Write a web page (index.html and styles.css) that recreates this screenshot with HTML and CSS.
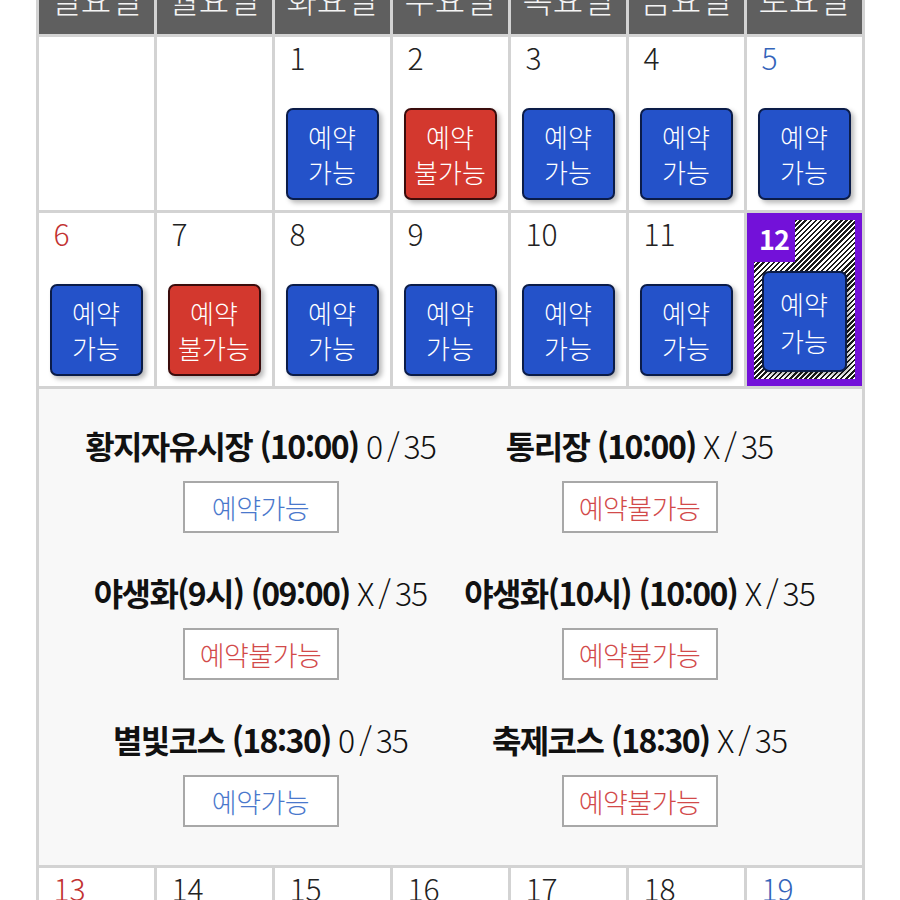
FILE: index.html
```html
<!DOCTYPE html>
<html lang="ko">
<head>
<meta charset="utf-8">
<title>예약 달력</title>
<link rel="stylesheet" href="styles.css">
</head>
<body>
<div class="cal">
  <div class="head">일요일</div>
  <div class="head">월요일</div>
  <div class="head">화요일</div>
  <div class="head">수요일</div>
  <div class="head">목요일</div>
  <div class="head">금요일</div>
  <div class="head">토요일</div>

  <div class="day"></div>
  <div class="day"></div>
  <div class="day"><div class="num">1</div><div class="btn ok">예약<br>가능</div></div>
  <div class="day"><div class="num">2</div><div class="btn no">예약<br>불가능</div></div>
  <div class="day"><div class="num">3</div><div class="btn ok">예약<br>가능</div></div>
  <div class="day"><div class="num">4</div><div class="btn ok">예약<br>가능</div></div>
  <div class="day"><div class="num sat">5</div><div class="btn ok">예약<br>가능</div></div>

  <div class="day"><div class="num sun">6</div><div class="btn ok">예약<br>가능</div></div>
  <div class="day"><div class="num">7</div><div class="btn no">예약<br>불가능</div></div>
  <div class="day"><div class="num">8</div><div class="btn ok">예약<br>가능</div></div>
  <div class="day"><div class="num">9</div><div class="btn ok">예약<br>가능</div></div>
  <div class="day"><div class="num">10</div><div class="btn ok">예약<br>가능</div></div>
  <div class="day"><div class="num">11</div><div class="btn ok">예약<br>가능</div></div>
  <div class="day selected">
    <div class="hatch">
      <div class="sel-num">12</div>
      <div class="btn ok sel-btn">예약<br>가능</div>
    </div>
  </div>

  <div class="panel">
    <div class="item">
      <div class="title">황지자유시장 (10:00) <span class="cnt">0 / 35</span></div>
      <div class="pbtn pok">예약가능</div>
    </div>
    <div class="item">
      <div class="title">통리장 (10:00) <span class="cnt">X / 35</span></div>
      <div class="pbtn pno">예약불가능</div>
    </div>
    <div class="item">
      <div class="title">야생화(9시) (09:00) <span class="cnt">X / 35</span></div>
      <div class="pbtn pno">예약불가능</div>
    </div>
    <div class="item">
      <div class="title">야생화(10시) (10:00) <span class="cnt">X / 35</span></div>
      <div class="pbtn pno">예약불가능</div>
    </div>
    <div class="item">
      <div class="title">별빛코스 (18:30) <span class="cnt">0 / 35</span></div>
      <div class="pbtn pok">예약가능</div>
    </div>
    <div class="item">
      <div class="title">축제코스 (18:30) <span class="cnt">X / 35</span></div>
      <div class="pbtn pno">예약불가능</div>
    </div>
  </div>

  <div class="day"><div class="num sun">13</div></div>
  <div class="day"><div class="num">14</div></div>
  <div class="day"><div class="num">15</div></div>
  <div class="day"><div class="num">16</div></div>
  <div class="day"><div class="num">17</div></div>
  <div class="day"><div class="num">18</div></div>
  <div class="day"><div class="num sat">19</div></div>
</div>
</body>
</html>
```

FILE: styles.css
```css
html, body {
  margin: 0;
  padding: 0;
  background: #ffffff;
  font-family: "Noto Sans CJK KR", "Noto Sans", sans-serif;
  overflow: hidden;
}

.cal {
  width: 829px;
  box-sizing: border-box;
  margin: -36px auto 0;
  display: grid;
  grid-template-columns: repeat(7, 115px);
  gap: 3px;
  padding: 0 3px 3px;
  background: #d3d3d3;
}

.head {
  height: 70px;
  background: #5f5f5f;
  color: #f4f4f4;
  font-size: 33px;
  font-weight: 300;
  display: flex;
  align-items: center;
  justify-content: center;
}

.day {
  height: 173px;
  background: #ffffff;
  display: flex;
  flex-direction: column;
}

.num {
  padding-left: 15px;
  font-size: 30px;
  line-height: 40px;
  font-weight: 300;
  color: #222222;
}

.num.sun { color: #c23232; }
.num.sat { color: #3464ba; }

.btn {
  width: 93px;
  height: 92px;
  box-sizing: border-box;
  margin: auto auto 10px;
  border-radius: 7px;
  border: 2px solid #0b1c48;
  display: flex;
  align-items: center;
  justify-content: center;
  text-align: center;
  color: #ffffff;
  font-size: 26px;
  line-height: 35px;
  font-weight: 300;
  box-shadow: 3px 3px 5px rgba(0, 0, 0, 0.28);
}

.btn.ok { background: #2452c9; }
.btn.no { background: #d3382e; border-color: #3a0c0c; }

.day.selected {
  background: #7311d9;
  padding: 7px;
  box-sizing: border-box;
}

.hatch {
  flex: 1;
  display: flex;
  flex-direction: column;
  background: repeating-linear-gradient(135deg, #1a1a1a 0 1.8px, #ffffff 1.8px 3.6px);
}

.sel-num {
  width: 41px;
  height: 42px;
  background: #7311d9;
  color: #ffffff;
  font-size: 27px;
  font-weight: 700;
  line-height: 38px;
  text-align: center;
  letter-spacing: -1px;
}

.btn.sel-btn {
  width: 85px;
  height: 101px;
  margin: 9px auto 6px;
  line-height: 37px;
}

.panel {
  grid-column: 1 / -1;
  background: #f8f8f8;
  padding-top: 35px;
  display: flex;
  flex-wrap: wrap;
  justify-content: center;
}

.item {
  width: 379px;
  height: 147px;
  display: flex;
  flex-direction: column;
  align-items: center;
}

.title {
  font-size: 32px;
  line-height: 42px;
  font-weight: 700;
  letter-spacing: -1.6px;
  color: #111111;
  white-space: nowrap;
}

.cnt {
  font-weight: 300;
  word-spacing: -3px;
  letter-spacing: -1px;
}

.pbtn {
  margin-top: 15px;
  width: 156px;
  height: 52px;
  box-sizing: border-box;
  border: 2px solid #a8a8a8;
  background: #ffffff;
  display: flex;
  align-items: center;
  justify-content: center;
  font-size: 27px;
  font-weight: 300;
  letter-spacing: -0.5px;
}

.pok { color: #4a78cc; }
.pno { color: #d24a4a; }
```
